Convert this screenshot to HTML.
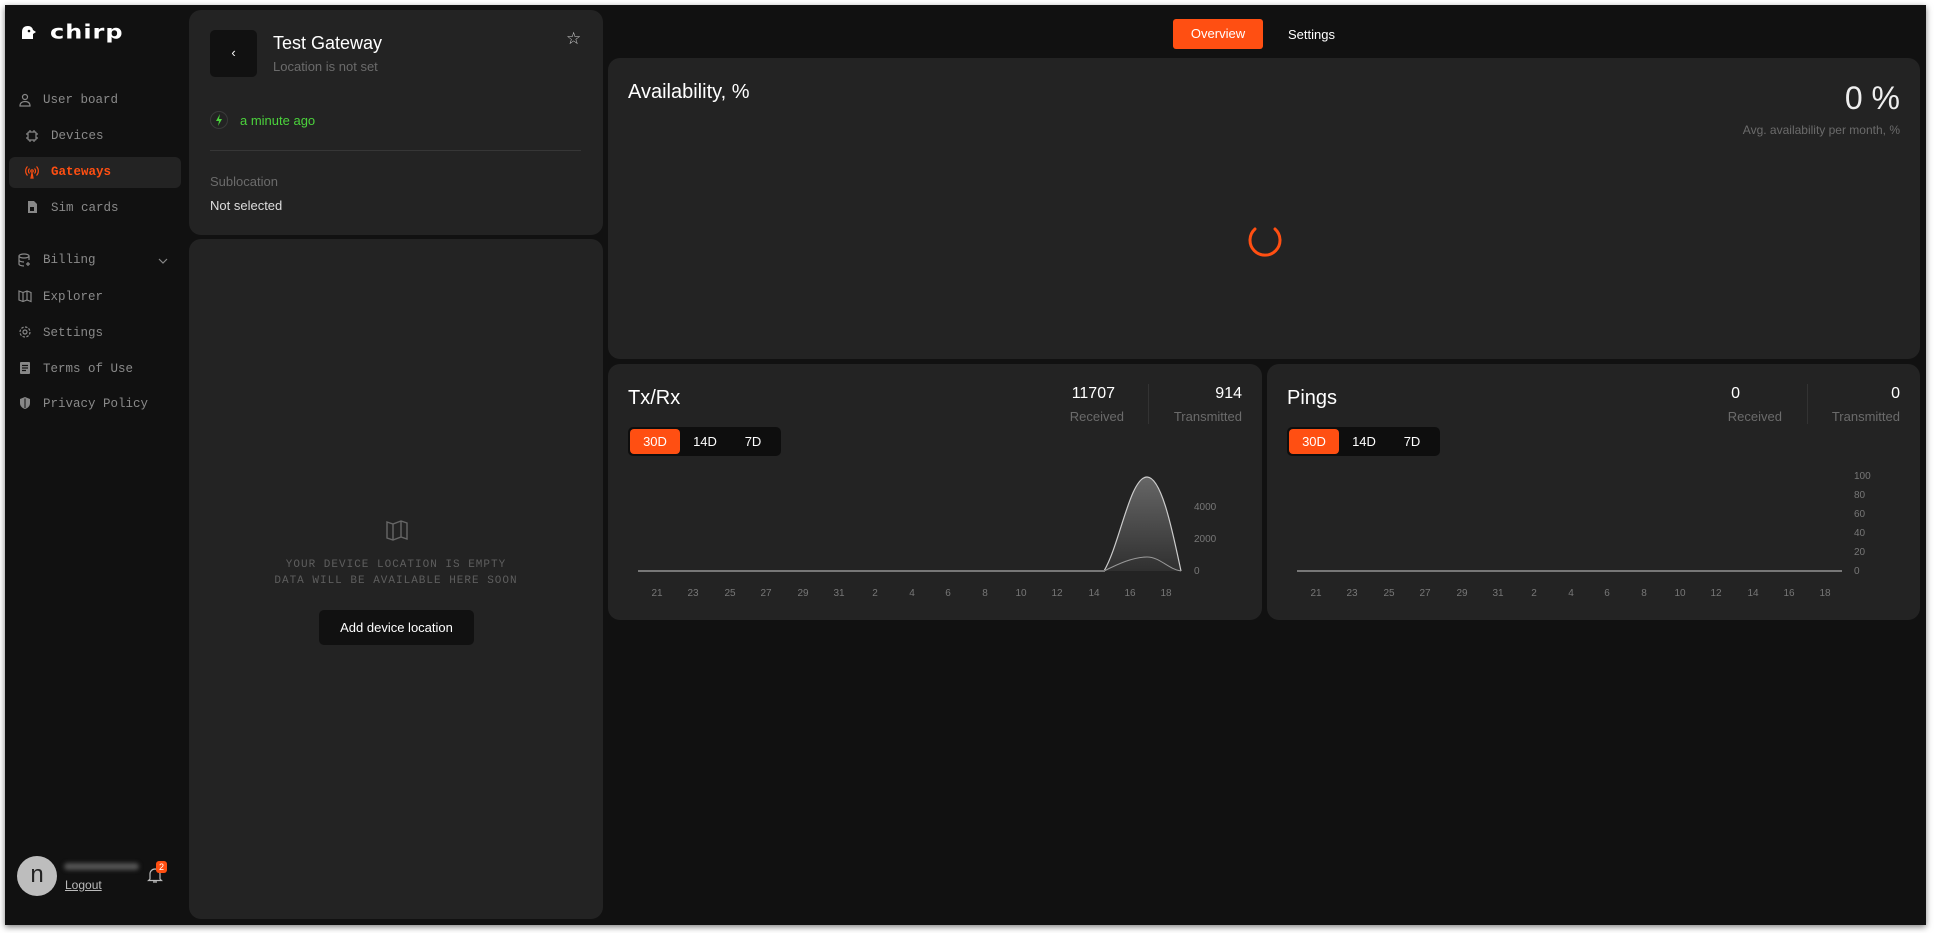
<!DOCTYPE html>
<html><head><meta charset="utf-8"><style>
*{box-sizing:border-box;margin:0;padding:0}
body{width:1934px;height:933px;background:#fff;position:relative;overflow:hidden;font-family:"Liberation Sans",sans-serif;color:#fff}
.frame{position:absolute;left:5px;top:5px;width:1921px;height:920px;background:#111;box-shadow:0 2px 6px rgba(0,0,0,.5)}
.a{position:absolute}
.card{position:absolute;background:#232323;border-radius:12px}
.nav{position:absolute;font-family:"Liberation Mono",monospace;font-size:12.5px;color:#8a8a8a;letter-spacing:0}
.ico{position:absolute;width:14px;height:14px}
.mut{color:#6b6b6b}
.seg{position:absolute;background:#0e0e0e;border-radius:5px;height:29px;width:153px}
.seg div{position:absolute;top:2px;height:25px;font-size:13px;line-height:25px;text-align:center}
.xl{position:absolute;font-size:10px;color:#777;transform:translateX(-50%)}
.yl{position:absolute;font-size:10px;color:#777}
</style></head><body>
<div class="frame"></div>
<svg class="a" style="left:20px;top:24px" width="18" height="16" viewBox="0 0 18 16"><path d="M2 15 L2 8 Q2 2 8 2 Q12 2 13 6 L16 8 L13 10 L13 15 Z" fill="#fff"/><circle cx="9" cy="7" r="1.3" fill="#111"/></svg>
<div class="a" style="left:50px;top:18px;font-family:'DejaVu Sans',sans-serif;font-weight:bold;font-size:24px;letter-spacing:1px;transform:scaleY(.8);line-height:28px">chirp</div>

<svg class="ico" style="left:18px;top:93px" viewBox="0 0 14 14" fill="none" stroke="#888" stroke-width="1.2"><circle cx="7" cy="4" r="2.5"/><path d="M2 13c0-3 2-4.5 5-4.5s5 1.5 5 4.5z"/></svg>
<div class="nav" style="left:43px;top:93px">User board</div>
<svg class="ico" style="left:25px;top:129px" viewBox="0 0 14 14" fill="none" stroke="#888" stroke-width="1.2"><rect x="3" y="3" width="8" height="8" rx="1"/><path d="M5 1v2M9 1v2M5 11v2M9 11v2M1 5h2M1 9h2M11 5h2M11 9h2"/></svg>
<div class="nav" style="left:51px;top:129px">Devices</div>
<div class="a" style="left:9px;top:157px;width:172px;height:31px;background:#232323;border-radius:6px"></div>
<svg class="ico" style="left:25px;top:165px" viewBox="0 0 14 14" fill="none" stroke="#ff4f12" stroke-width="1.2"><circle cx="7" cy="6" r="1.2"/><path d="M4.5 3.5a3.5 3.5 0 0 0 0 5M9.5 3.5a3.5 3.5 0 0 1 0 5M2.5 1.5a6.5 6.5 0 0 0 0 9M11.5 1.5a6.5 6.5 0 0 1 0 9M6 13l1-5 1 5z"/></svg>
<div class="nav" style="left:51px;top:165px;color:#ff4f12;font-weight:bold">Gateways</div>
<svg class="ico" style="left:25px;top:200px" viewBox="0 0 14 14"><path d="M3 1h6l3 3v9H3z" fill="#888"/><rect x="5" y="7" width="4" height="4" fill="#111"/></svg>
<div class="nav" style="left:51px;top:201px">Sim cards</div>
<svg class="ico" style="left:18px;top:253px" viewBox="0 0 14 14" fill="none" stroke="#888" stroke-width="1.2"><ellipse cx="6" cy="3" rx="5" ry="2"/><path d="M1 3v8c0 1 2 2 5 2M11 3v4M1 7c0 1 2 2 5 2M10 9v4M8 11h4"/></svg>
<div class="nav" style="left:43px;top:253px">Billing</div>
<svg class="a" style="left:158px;top:258px" width="10" height="6" viewBox="0 0 10 6"><path d="M1 1l4 4 4-4" stroke="#888" fill="none" stroke-width="1.2"/></svg>
<svg class="ico" style="left:18px;top:289px" viewBox="0 0 14 14" fill="none" stroke="#888" stroke-width="1.2"><path d="M1 2l4 1.5 4-1.5 4 1.5v9L9 11 5 12.5 1 11zM5 3.5v9M9 2v9"/></svg>
<div class="nav" style="left:43px;top:290px">Explorer</div>
<svg class="ico" style="left:18px;top:325px" viewBox="0 0 14 14" fill="none" stroke="#888" stroke-width="1.2"><circle cx="7" cy="7" r="2"/><circle cx="7" cy="7" r="5" stroke-dasharray="2.5 1.4"/></svg>
<div class="nav" style="left:43px;top:326px">Settings</div>
<svg class="ico" style="left:18px;top:361px" viewBox="0 0 14 14"><rect x="2" y="1" width="10" height="12" rx="1" fill="#888"/><path d="M4 4.5h6M4 7h6M4 9.5h4" stroke="#111" stroke-width="1.2"/></svg>
<div class="nav" style="left:43px;top:362px">Terms of Use</div>
<svg class="ico" style="left:18px;top:396px" viewBox="0 0 14 14"><path d="M7 1l5 2v4c0 3-2 5-5 6-3-1-5-3-5-6V3z" fill="#888"/><path d="M7 2.5v9.5" stroke="#111" stroke-width="1"/></svg>
<div class="nav" style="left:43px;top:397px">Privacy Policy</div>

<div class="a" style="left:17px;top:856px;width:40px;height:40px;border-radius:50%;background:#bdbdbd;color:#222;font-size:24px;text-align:center;line-height:38px">n</div>
<div class="a" style="left:64px;top:863px;width:75px;height:7px;background:#555;border-radius:4px;filter:blur(2px)"></div>
<div class="a" style="left:65px;top:878px;font-size:12px;color:#bbb;text-decoration:underline">Logout</div>
<svg class="a" style="left:147px;top:866px" width="16" height="18" viewBox="0 0 16 18" fill="none" stroke="#bbb" stroke-width="1.2"><path d="M3 13V8a5 5 0 0 1 10 0v5l1.5 1.5h-13zM6 16h4"/></svg>
<div class="a" style="left:156px;top:861px;width:11px;height:12px;background:#ff4f12;border-radius:3px;font-size:9px;text-align:center;line-height:12px">2</div>

<div class="card" style="left:189px;top:10px;width:414px;height:225px"></div>
<div class="a" style="left:210px;top:30px;width:47px;height:47px;background:#111;border-radius:5px;text-align:center;line-height:46px;font-size:13px">‹</div>
<div class="a" style="left:273px;top:33px;font-size:18px">Test Gateway</div>
<div class="a mut" style="left:273px;top:59px;font-size:13px">Location is not set</div>
<div class="a" style="left:566px;top:29px;font-size:17px;color:#ccc">☆</div>
<div class="a" style="left:210px;top:111px;width:18px;height:18px;border:1px solid #3a3a3a;border-radius:50%"></div>
<svg class="a" style="left:215px;top:114px" width="8" height="12" viewBox="0 0 8 12"><path d="M5 0L1 7h3l-1 5 4-7H4z" fill="#4bd23c"/></svg>
<div class="a" style="left:240px;top:113px;font-size:13px;color:#4bd23c">a minute ago</div>
<div class="a" style="left:210px;top:150px;width:371px;height:1px;background:#363636"></div>
<div class="a mut" style="left:210px;top:174px;font-size:13px">Sublocation</div>
<div class="a" style="left:210px;top:198px;font-size:13px;color:#ddd">Not selected</div>

<div class="card" style="left:189px;top:239px;width:414px;height:680px"></div>
<svg class="a" style="left:386px;top:519px" width="22" height="22" viewBox="0 0 22 22" fill="none" stroke="#666" stroke-width="1.4"><path d="M1 3l6 2 8-3 6 2v16l-6-2-8 3-6-2zM7 5v16M15 2v16"/></svg>
<div class="a" style="left:189px;top:557px;width:414px;text-align:center;font-family:'Liberation Mono',monospace;font-size:11px;color:#5e5e5e;letter-spacing:1px;line-height:16px">YOUR DEVICE LOCATION IS EMPTY<br>DATA WILL BE AVAILABLE HERE SOON</div>
<div class="a" style="left:319px;top:610px;width:155px;height:35px;background:#111;border-radius:5px;font-size:13px;text-align:center;line-height:35px">Add device location</div>

<div class="a" style="left:1173px;top:19px;width:90px;height:30px;background:#ff4f12;border-radius:3px;font-size:13px;text-align:center;line-height:30px">Overview</div>
<div class="a" style="left:1288px;top:27px;font-size:13px">Settings</div>

<div class="card" style="left:608px;top:58px;width:1312px;height:301px"></div>
<div class="a" style="left:628px;top:81px;font-size:20px">Availability, %</div>
<div class="a" style="left:1700px;top:80px;width:200px;text-align:right;font-size:32px;font-weight:300;color:#eee">0 %</div>
<div class="a mut" style="left:1600px;top:123px;width:300px;text-align:right;font-size:12px">Avg. availability per month, %</div>
<svg class="a" style="left:1246px;top:221px" width="38" height="38" viewBox="0 0 38 38"><path d="M9 8 A15 15 0 1 0 29 8" fill="none" stroke="#ff4f12" stroke-width="3" stroke-linecap="round"/></svg>

<div class="card" style="left:608px;top:364px;width:654px;height:256px"></div>
<div class="a" style="left:628px;top:387px;font-size:20px">Tx/Rx</div>
<div class="a" style="left:1020px;top:385px;width:95px;text-align:right;font-size:16px">11707</div>
<div class="a mut" style="left:1020px;top:409px;width:104px;text-align:right;font-size:13px">Received</div>
<div class="a" style="left:1148px;top:384px;width:1px;height:40px;background:#333"></div>
<div class="a" style="left:1142px;top:385px;width:100px;text-align:right;font-size:16px">914</div>
<div class="a mut" style="left:1142px;top:409px;width:100px;text-align:right;font-size:13px">Transmitted</div>
<div class="seg" style="left:628px;top:427px"><div style="left:2px;width:50px;background:#ff4f12;border-radius:4px">30D</div><div style="left:52px;width:50px">14D</div><div style="left:100px;width:50px">7D</div></div>
<svg class="a" style="left:608px;top:364px" width="654" height="256">
<defs><linearGradient id="g" x1="0" y1="0" x2="0" y2="1"><stop offset="0" stop-color="#777"/><stop offset="1" stop-color="#333"/></linearGradient></defs>
<path d="M496 207 C512 180 522 113 539 113 C554 113 565 170 573 207 Z" fill="url(#g)" opacity=".8"/>
<path d="M30 207 L496 207 C512 180 522 113 539 113 C554 113 565 170 573 207" fill="none" stroke="#ccc" stroke-width="1.2"/>
<path d="M496 207 C510 200 525 193 539 193 C552 193 560 205 573 207" fill="none" stroke="#999" stroke-width="1"/>
<line x1="30" y1="207" x2="497" y2="207" stroke="#777" stroke-width="2"/>
</svg>
<div class="yl" style="left:1194px;top:502px">4000</div>
<div class="yl" style="left:1194px;top:534px">2000</div>
<div class="yl" style="left:1194px;top:566px">0</div>
<div class="xl" style="left:657px;top:588px">21</div><div class="xl" style="left:693px;top:588px">23</div><div class="xl" style="left:730px;top:588px">25</div><div class="xl" style="left:766px;top:588px">27</div><div class="xl" style="left:803px;top:588px">29</div><div class="xl" style="left:839px;top:588px">31</div><div class="xl" style="left:875px;top:588px">2</div><div class="xl" style="left:912px;top:588px">4</div><div class="xl" style="left:948px;top:588px">6</div><div class="xl" style="left:985px;top:588px">8</div><div class="xl" style="left:1021px;top:588px">10</div><div class="xl" style="left:1057px;top:588px">12</div><div class="xl" style="left:1094px;top:588px">14</div><div class="xl" style="left:1130px;top:588px">16</div><div class="xl" style="left:1166px;top:588px">18</div>

<div class="card" style="left:1267px;top:364px;width:653px;height:256px"></div>
<div class="a" style="left:1287px;top:387px;font-size:20px">Pings</div>
<div class="a" style="left:1650px;top:385px;width:90px;text-align:right;font-size:16px">0</div>
<div class="a mut" style="left:1680px;top:409px;width:102px;text-align:right;font-size:13px">Received</div>
<div class="a" style="left:1807px;top:384px;width:1px;height:40px;background:#333"></div>
<div class="a" style="left:1800px;top:385px;width:100px;text-align:right;font-size:16px">0</div>
<div class="a mut" style="left:1800px;top:409px;width:100px;text-align:right;font-size:13px">Transmitted</div>
<div class="seg" style="left:1287px;top:427px"><div style="left:2px;width:50px;background:#ff4f12;border-radius:4px">30D</div><div style="left:52px;width:50px">14D</div><div style="left:100px;width:50px">7D</div></div>
<div class="a" style="left:1297px;top:570px;width:545px;height:2px;background:#777"></div>
<div class="yl" style="left:1854px;top:471px">100</div>
<div class="yl" style="left:1854px;top:490px">80</div>
<div class="yl" style="left:1854px;top:509px">60</div>
<div class="yl" style="left:1854px;top:528px">40</div>
<div class="yl" style="left:1854px;top:547px">20</div>
<div class="yl" style="left:1854px;top:566px">0</div>
<div class="xl" style="left:1316px;top:588px">21</div><div class="xl" style="left:1352px;top:588px">23</div><div class="xl" style="left:1389px;top:588px">25</div><div class="xl" style="left:1425px;top:588px">27</div><div class="xl" style="left:1462px;top:588px">29</div><div class="xl" style="left:1498px;top:588px">31</div><div class="xl" style="left:1534px;top:588px">2</div><div class="xl" style="left:1571px;top:588px">4</div><div class="xl" style="left:1607px;top:588px">6</div><div class="xl" style="left:1644px;top:588px">8</div><div class="xl" style="left:1680px;top:588px">10</div><div class="xl" style="left:1716px;top:588px">12</div><div class="xl" style="left:1753px;top:588px">14</div><div class="xl" style="left:1789px;top:588px">16</div><div class="xl" style="left:1825px;top:588px">18</div>
</body></html>
